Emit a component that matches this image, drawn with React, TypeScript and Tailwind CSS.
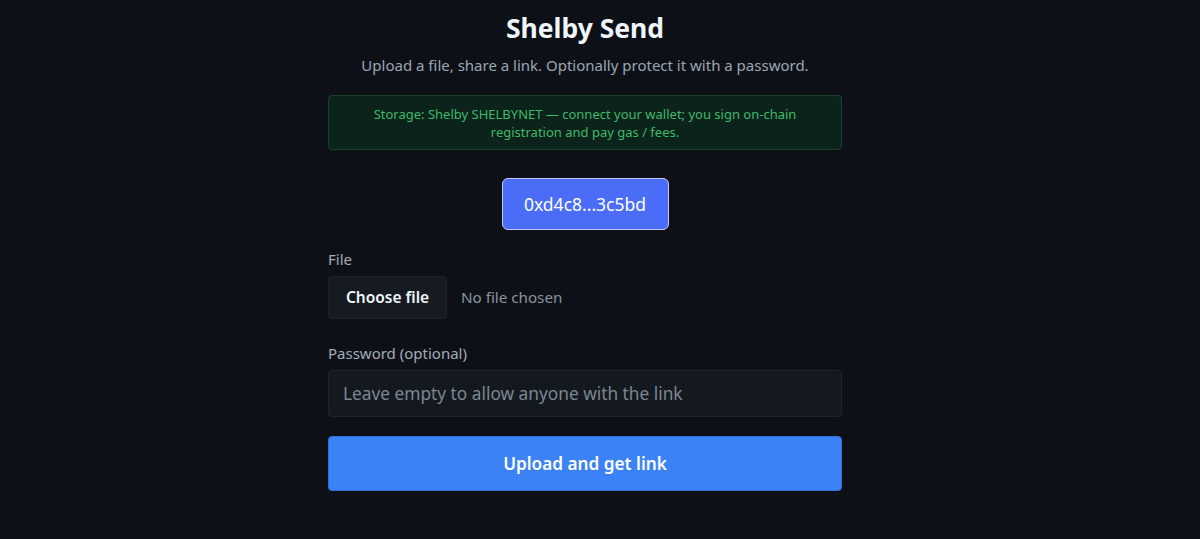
import React, { useState } from 'react'

export default function App() {
  const [password, setPassword] = useState('')

  return (
    <div
      className="min-h-screen w-full bg-[#0d1117] text-[#e6edf3] pr-[30px]"
      style={{ fontFamily: '"Noto Sans", "Open Sans", sans-serif' }}
    >
      <div className="mx-auto w-[514px] pt-[7px]">
        {/* header */}
        <h1 className="text-center text-[26.5px] font-bold leading-[42px] text-[#f0f6fc]">Shelby Send</h1>
        <p className="mt-[4px] text-center text-[15px] leading-[24px] text-[#9ba6b4]">
          Upload a file, share a link. Optionally protect it with a password.
        </p>

        {/* storage notice */}
        <div className="mt-[18px] rounded-[4px] border border-[#15432d] bg-[#0b231a] px-6 pt-[9px] pb-[8px] text-center text-[13px] leading-[18px] text-[#3fb96a]">
          Storage: Shelby SHELBYNET — connect your wallet; you sign on-chain
          <br />
          registration and pay gas / fees.
        </div>

        {/* wallet */}
        <div className="mt-[28px] flex justify-center">
          <button className="h-[52px] w-[167px] rounded-[6px] border border-[#c5cdf5] bg-[#4a6cf7] text-[17.5px] text-white">
            0xd4c8...3c5bd
          </button>
        </div>

        {/* file */}
        <label className="mt-[17px] block text-[15px] leading-[24px] text-[#a2acb8]">File</label>
        <div className="mt-[5px] flex items-center">
          <button className="h-[43px] w-[119px] rounded-[4px] border border-[#1c222b] bg-[#161b22] text-[15.5px] font-semibold text-[#f0f6fc]">
            Choose file
          </button>
          <span className="ml-[14px] text-[15.2px] text-[#8b949e]">No file chosen</span>
        </div>

        {/* password */}
        <label className="mt-[22px] block text-[15px] leading-[24px] text-[#a2acb8]">Password (optional)</label>
        <input
          type="password"
          value={password}
          onChange={(e) => setPassword(e.target.value)}
          placeholder="Leave empty to allow anyone with the link"
          className="mt-[5px] h-[47px] w-full rounded-[4px] border border-[#1f252e] bg-[#141920] px-[14px] text-[17.3px] text-[#e6edf3] placeholder:text-[#7d8792] outline-none"
        />

        <button className="mt-[19px] h-[55px] w-full rounded-[4px] border border-[#2f6fd8] bg-[#3b82f6] text-[17.2px] font-semibold text-white">
          Upload and get link
        </button>
      </div>
    </div>
  )
}
